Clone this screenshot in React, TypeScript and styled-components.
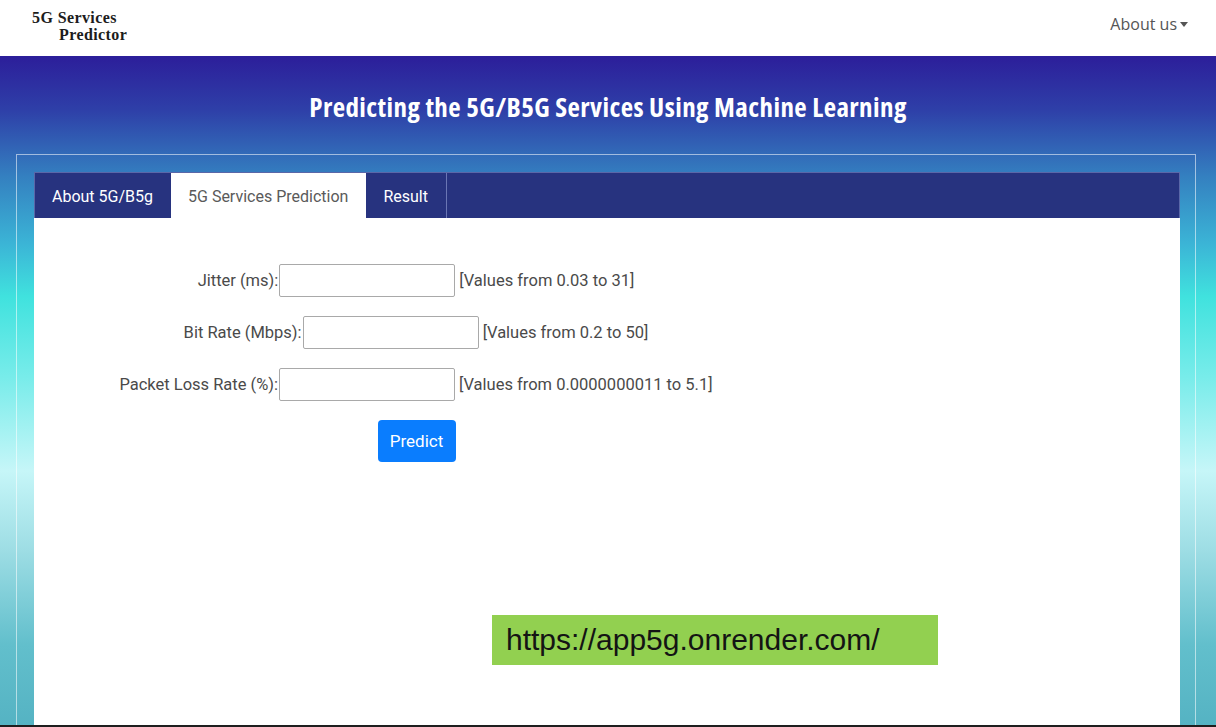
import { createGlobalStyle } from 'styled-components';
import styled from 'styled-components';

const GlobalStyle = createGlobalStyle`
  html, body {
    margin: 0;
    padding: 0;
    height: 100%;
  }
  body {
    font-family: Roboto, 'Open Sans', sans-serif;
    background: #ffffff;
  }
  #root {
    height: 100%;
  }
  * {
    box-sizing: border-box;
  }
`;

const Page = styled.div`
  height: 727px;
  display: flex;
  flex-direction: column;
  border-bottom: 2px solid #1e1e1e;
  overflow: hidden;
`;

const NavBar = styled.header`
  height: 56px;
  flex: none;
  display: flex;
  align-items: center;
  justify-content: space-between;
  padding: 0 28px 0 32px;
  background: #ffffff;
`;

const Logo = styled.div`
  font-family: 'Liberation Serif', 'DejaVu Serif', serif;
  font-weight: 700;
  font-size: 16px;
  line-height: 17px;
  color: #1c1c1c;
  margin-top: -5px;
  letter-spacing: 0.4px;

  span {
    display: block;
    padding-left: 27px;
  }
`;

const NavMenu = styled.button`
  border: none;
  background: none;
  padding: 0;
  font-family: 'Open Sans', sans-serif;
  font-size: 16px;
  color: #555;
  display: flex;
  align-items: center;
  gap: 3px;
  margin-top: -8px;
  cursor: pointer;

  &::after {
    content: '';
    border-top: 5px solid #555;
    border-left: 4px solid transparent;
    border-right: 4px solid transparent;
    margin-top: 1px;
  }
`;

const Hero = styled.main`
  flex: 1;
  display: flex;
  flex-direction: column;
  background: linear-gradient(
    180deg,
    #2c1e9a 0%,
    #2e3fa8 8%,
    #3480c0 18%,
    #3bb4d6 28%,
    #40e2de 36%,
    #78ecea 48%,
    #c6f6f8 62%,
    #9ddde4 74%,
    #62bfcc 88%,
    #55b3c3 100%
  );
`;

const Title = styled.h1`
  margin: 0;
  height: 98px;
  display: flex;
  align-items: center;
  justify-content: center;
  padding-top: 3px;
  font-family: 'Open Sans', sans-serif;
  font-stretch: 75%;
  font-weight: 700;
  font-size: 27px;
  letter-spacing: 0.4px;
  color: #ffffff;
`;

const Frame = styled.section`
  flex: 1;
  margin: 0 20px 0 16px;
  border: 1px solid rgba(255, 255, 255, 0.55);
  border-bottom: none;
  padding: 17px 15px 0 17px;
  display: flex;
  flex-direction: column;
`;

const Card = styled.div`
  flex: 1;
  display: flex;
  flex-direction: column;
`;

const TabBar = styled.nav`
  height: 46px;
  flex: none;
  display: flex;
  background: #27337f;
  border: 1px solid #5a67a8;
  border-bottom: none;
`;

const Tab = styled.div<{ $active?: boolean; $divider?: boolean }>`
  display: flex;
  align-items: center;
  padding: 1px 18px 0 17px;
  font-family: Roboto, 'Open Sans', sans-serif;
  font-size: 16px;
  color: ${(p) => (p.$active ? '#5a5a5a' : '#ffffff')};
  background: ${(p) => (p.$active ? '#ffffff' : 'transparent')};
  border-right: ${(p) => (p.$divider ? '1px solid #6a76b4' : 'none')};
`;

const Content = styled.div`
  flex: 1;
  position: relative;
  background: #ffffff;
`;

const FormColumn = styled.form`
  width: 66.667%;
  padding-top: 46px;
  text-align: center;
  font-family: Roboto, 'Open Sans', sans-serif;
  font-size: 16.5px;
  color: #4a4a4a;
`;

const Row = styled.div`
  height: 33px;
  margin-bottom: 19px;
  display: flex;
  align-items: center;
  justify-content: center;
`;

const Label = styled.label`
  margin-right: 1px;
`;

const Field = styled.input`
  width: 176px;
  height: 33px;
  border: 1px solid #a9a9a9;
  border-radius: 2px;
  margin-right: 4px;
  font-size: 15px;
`;

const Hint = styled.span`
  color: #4a4a4a;
`;

const PredictButton = styled.button`
  width: 78px;
  height: 42px;
  margin-left: 1px;
  border: none;
  border-radius: 4px;
  background: #0a7dfe;
  color: #ffffff;
  font-family: Roboto, 'Open Sans', sans-serif;
  font-size: 17px;
  cursor: pointer;
`;

const UrlBadge = styled.div`
  position: absolute;
  left: 458px;
  top: 397px;
  width: 446px;
  height: 50px;
  background: #92d050;
  padding-left: 14px;
  display: flex;
  align-items: center;
  font-family: 'Liberation Sans', Arial, sans-serif;
  font-size: 30px;
  color: #141414;
`;

const fields = [
  { label: 'Jitter (ms):', hint: '[Values from 0.03 to 31]' },
  { label: 'Bit Rate (Mbps):', hint: '[Values from 0.2 to 50]' },
  { label: 'Packet Loss Rate (%):', hint: '[Values from 0.0000000011 to 5.1]' },
];

export default function App() {
  return (
    <>
      <GlobalStyle />
      <Page>
        <NavBar>
          <Logo>
            5G Services
            <span>Predictor</span>
          </Logo>
          <NavMenu>About us</NavMenu>
        </NavBar>
        <Hero>
          <Title>Predicting the 5G/B5G Services Using Machine Learning</Title>
          <Frame>
            <Card>
              <TabBar>
                <Tab>About 5G/B5g</Tab>
                <Tab $active>5G Services Prediction</Tab>
                <Tab $divider>Result</Tab>
              </TabBar>
              <Content>
                <FormColumn onSubmit={(e) => e.preventDefault()}>
                  {fields.map((f) => (
                    <Row key={f.label}>
                      <Label>{f.label}</Label>
                      <Field type="text" />
                      <Hint>{f.hint}</Hint>
                    </Row>
                  ))}
                  <PredictButton type="submit">Predict</PredictButton>
                </FormColumn>
                <UrlBadge>https://app5g.onrender.com/</UrlBadge>
              </Content>
            </Card>
          </Frame>
        </Hero>
      </Page>
    </>
  );
}
